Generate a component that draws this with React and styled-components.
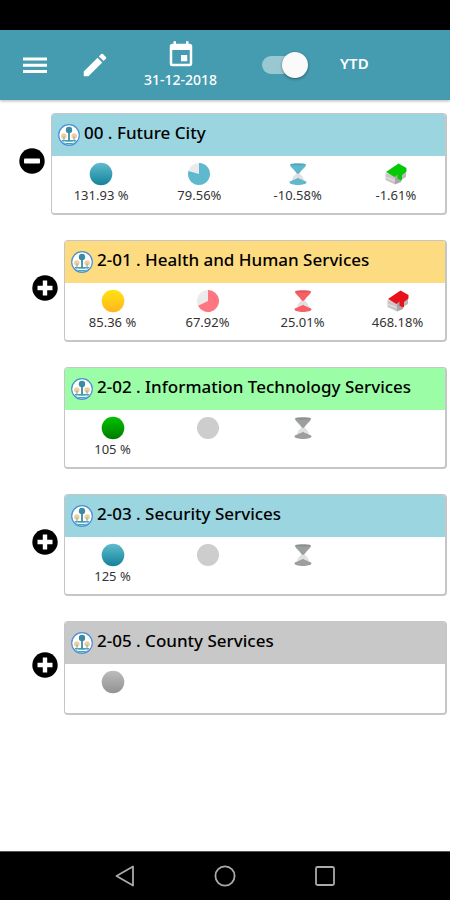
import React, { Component } from "react";
import styled, { createGlobalStyle } from "styled-components";
import { MdEvent } from "react-icons/md";

const GlobalStyle = createGlobalStyle`
* {
  box-sizing: border-box;
}
body {
  margin: 0;
  background: #fff;
  color: #000;
  font-family: "Noto Sans", "Open Sans", sans-serif;
}
button {
  margin: 0;
  padding: 0;
  border: 0;
  background: none;
  color: inherit;
  font: inherit;
  cursor: pointer;
}
`;

const Screen = styled.div`
  display: flex;
  flex-direction: column;
  min-height: 100vh;
`;

const StatusBar = styled.div`
  height: 30px;
  background: #000;
`;

const Toolbar = styled.header`
  display: flex;
  align-items: center;
  height: 70px;
  padding-left: 20px;
  background: #459baf;
  color: #fff;
  box-shadow: 0 1px 3px rgba(0, 0, 0, 0.3);
`;

const IconButton = styled.button`
  display: flex;
  margin-right: 30px;
`;

const DateButton = styled.button`
  display: flex;
  flex-direction: column;
  align-items: center;
  margin-left: 4px;
  font-size: 14px;
  font-weight: 500;
  line-height: 20px;
`;

const Switch = styled.label`
  display: flex;
  align-items: center;
  gap: 32px;
  margin-left: 45px;
  cursor: pointer;
`;

const SwitchText = styled.span`
  padding-bottom: 4px;
  font-size: 15px;
  font-weight: 600;
  line-height: 20px;
`;

const SwitchInput = styled.input`
  appearance: none;
  display: flex;
  align-items: center;
  width: 46px;
  height: 26px;
  margin: 0;
  cursor: pointer;
  &::before {
    content: "";
    width: 36px;
    height: 18px;
    border-radius: 9px;
    background: rgba(255, 255, 255, 0.45);
  }
  &::after {
    content: "";
    flex: none;
    width: 26px;
    height: 26px;
    margin-left: -36px;
    border-radius: 50%;
    background: #fafafa;
    box-shadow: 0 1px 3px rgba(0, 0, 0, 0.4);
  }
  &:checked::after {
    margin-left: -16px;
  }
`;

const Tree = styled.main`
  flex: 1;
  display: flex;
  flex-direction: column;
  gap: 25px;
  padding: 13px 3px 24px 19px;
`;

const Node = styled.div`
  display: flex;
  align-items: center;
  gap: 6px;
  padding-left: ${(props) => props.$level * 13}px;
`;

const Toggle = styled.div`
  flex: none;
  width: 26px;
  padding-bottom: 6px;
  button {
    display: block;
  }
  svg {
    display: block;
  }
`;

const Card = styled.section`
  flex: 1;
  min-width: 0;
  border: 1px solid #c6c6c6;
  border-right-width: 2px;
  border-bottom-width: 2px;
  border-radius: 4px;
  background: #fff;
  overflow: hidden;
`;

const CardHeader = styled.div`
  display: flex;
  align-items: center;
  gap: 4px;
  height: 42px;
  padding-left: 6px;
  background: ${(props) => props.$color};
`;

const CardTitle = styled.h2`
  margin: 0;
  padding-bottom: 4px;
  font-size: 17px;
  font-weight: 500;
  line-height: 24px;
  white-space: nowrap;
`;

const Metrics = styled.div`
  display: grid;
  grid-template-columns: repeat(4, 1fr);
  min-height: 49px;
  padding: 6px 0 9px;
`;

const Metric = styled.div`
  display: flex;
  flex-direction: column;
  align-items: center;
  font-size: 13px;
  line-height: 18px;
  color: #333;
`;

const NavBar = styled.nav`
  display: grid;
  grid-template-columns: repeat(3, 1fr);
  justify-items: center;
  align-items: center;
  height: 49px;
  padding: 0 75px;
  background: #000;
  border-top: 1px solid #555;
  svg {
    display: block;
  }
`;

const palette = {
  blue: ["#5fbccd", "#13829a"],
  yellow: ["#ffe310", "#ffb520"],
  green: ["#00c400", "#007a00"],
  gray: ["#bcbcbc", "#929292"],
};

const MenuIcon = () => (
  <svg width="30" height="30" viewBox="0 0 30 30" fill="currentColor">
    <path d="M3 7.500H27V10.500H3ZM3 13.700H27V16.700H3ZM3 20H27V23H3Z" />
  </svg>
);

const PencilIcon = () => (
  <svg width="30" height="30" viewBox="0 0 24 24" fill="currentColor">
    <path d="M3 17.250V21h3.750L17.810 9.940l-3.750-3.750L3 17.250zM20.710 7.040c.390-.390.390-1.020 0-1.410l-2.340-2.340c-.390-.390-1.020-.390-1.410 0l-1.830 1.830 3.750 3.750 1.830-1.830z" />
  </svg>
);

const Ball = ({ color }) => (
  <svg width="24" height="24" viewBox="0 0 24 24">
    <defs>
      <linearGradient id={`ball-${color}`} x1="0" y1="0" x2="0" y2="1">
        <stop offset="0" stopColor={palette[color][0]} />
        <stop offset="1" stopColor={palette[color][1]} />
      </linearGradient>
    </defs>
    <circle cx="12" cy="12" r="11.3" fill={`url(#ball-${color})`} />
  </svg>
);

// share is the filled part of the pie, clockwise from the top
const Pie = ({ share, color }) => {
  const angle = share * 2 * Math.PI;
  const x = 12 + 11 * Math.sin(angle);
  const y = 12 - 11 * Math.cos(angle);
  return (
    <svg width="24" height="24" viewBox="0 0 24 24">
      <circle cx="12" cy="12" r="11" fill={share ? "#ebebeb" : "#cdcdcd"} />
      {share ? (
        <path d={`M12 12V1A11 11 0 ${share > 0.5 ? 1 : 0} 1 ${x} ${y}Z`} fill={color} />
      ) : null}
    </svg>
  );
};

const Hourglass = ({ color }) => (
  <svg width="24" height="24" viewBox="0 0 24 24">
    <path d="M12 10L16.500 14.500L19 20H5L7.500 14.500Z" fill="#e2e0e0" />
    <path d="M4 2.500C4 0.800 20 0.800 20 2.500C20 4.500 18 6 16 8C14.500 9.500 13.500 12 12 12S9.500 9.500 8 8C6 6 4 4.500 4 2.500Z" fill={color} />
    <path d="M3.500 20.500C3.500 18.700 8 18.500 12 15.800C16 18.500 20.500 18.700 20.500 20.500C20.500 23.800 3.500 23.800 3.500 20.500Z" fill={color} />
    <ellipse cx="12" cy="2.600" rx="7.500" ry="1" fill="#000" opacity="0.1" />
  </svg>
);

const House = ({ color }) => (
  <svg width="24" height="24" viewBox="0 0 24 24">
    <path d="M1.500 11L11 14V22.500L1.500 18Z" fill="#c9c5c9" />
    <path d="M11 14L15 10L17 12V20L11 22.500Z" fill="#aaa6aa" />
    <path d="M17 11L22 9V15L17 18Z" fill="#bcb8bc" />
    <path d="M2 10L14.500 1.500L22.500 6V9.500L18 13V18.500L13.500 17V12.500L10.500 15Z" fill={color} />
    <path d="M2 15.500L10.500 18.500" stroke="#e4e1e4" strokeWidth="1.200" />
  </svg>
);

const CityLogo = () => (
  <svg width="22" height="22" viewBox="0 0 22 22">
    <circle cx="11" cy="11" r="10.300" fill="#fff" stroke="#4c8fd6" strokeWidth="1.200" />
    <path d="M3.500 16H18.500C17 19 14 20.500 11 20.500S5 19 3.500 16Z" fill="#42a3bb" />
    <path d="M5.500 17.800Q11 19 16.500 17.800" stroke="#fff" strokeWidth="1.200" fill="none" />
    <circle cx="5.800" cy="12" r="2.800" fill="#edd0a2" />
    <circle cx="16.200" cy="12" r="2.800" fill="#edd0a2" />
    <circle cx="11" cy="6" r="3.200" fill="#3a8ba3" />
    <path d="M11 7V16.500" stroke="#3a8ba3" strokeWidth="1.800" />
    <path d="M6 12.500V16.500M16 12.500V16.500" stroke="#8ea58e" strokeWidth="1" />
  </svg>
);

const ToggleIcon = ({ open }) => (
  <svg width="26" height="26" viewBox="0 0 26 26">
    <circle cx="13" cy="13" r="12.700" fill="#000" />
    {open ? (
      <rect x="5" y="10.500" width="16" height="5" rx="1" fill="#fff" />
    ) : (
      <path d="M10.800 5.500H15.200V10.800H20.500V15.200H15.200V20.500H10.800V15.200H5.500V10.800H10.800Z" fill="#fff" />
    )}
  </svg>
);

const departments = [
  {
    title: "00 . Future City",
    level: 0,
    color: "#9bd5e0",
    ball: "blue",
    score: "131.93 %",
    pie: { share: 0.7956, color: "#5fb9ce", text: "79.56%" },
    time: { color: "#5fb9cd", text: "-10.58%" },
    house: { color: "#05c905", text: "-1.61%" },
  },
  {
    title: "2-01 . Health and Human Services",
    level: 1,
    color: "#fddb80",
    toggle: true,
    ball: "yellow",
    score: "85.36 %",
    pie: { share: 0.6792, color: "#ff7680", text: "67.92%" },
    time: { color: "#f65f66", text: "25.01%" },
    house: { color: "#e9121b", text: "468.18%" },
  },
  {
    title: "2-02 . Information Technology Services",
    level: 1,
    color: "#9bfea7",
    ball: "green",
    score: "105 %",
    pie: { share: 0 },
    time: { color: "#9b9f9f" },
  },
  {
    title: "2-03 . Security Services",
    level: 1,
    color: "#9bd5e0",
    toggle: true,
    ball: "blue",
    score: "125 %",
    pie: { share: 0 },
    time: { color: "#9b9f9f" },
  },
  {
    title: "2-05 . County Services",
    level: 1,
    color: "#c8c8c8",
    toggle: true,
    ball: "gray",
  },
];

class App extends Component {
  constructor(props) {
    super(props);

    this.state = {
      open: true,
      ytd: true,
    };
    this.handleToggle = this.handleToggle.bind(this);
    this.handleYtd = this.handleYtd.bind(this);
  }

  handleToggle() {
    this.setState({ open: !this.state.open });
  }

  handleYtd(e) {
    this.setState({ ytd: e.target.checked });
  }

  renderToggle(item) {
    if (item.level === 0) {
      return (
        <button type="button" aria-label="Collapse" onClick={this.handleToggle}>
          <ToggleIcon open={this.state.open} />
        </button>
      );
    }
    return item.toggle ? (
      <button type="button" aria-label="Expand">
        <ToggleIcon />
      </button>
    ) : null;
  }

  render() {
    const { open, ytd } = this.state;
    const visible = departments.filter((item) => open || item.level === 0);

    return (
      <Screen>
        <GlobalStyle />
        <StatusBar />
        <Toolbar>
          <IconButton type="button" aria-label="Menu">
            <MenuIcon />
          </IconButton>
          <IconButton type="button" aria-label="Edit">
            <PencilIcon />
          </IconButton>
          <DateButton type="button">
            <MdEvent size={30} />
            31-12-2018
          </DateButton>
          <Switch>
            <SwitchInput type="checkbox" checked={ytd} onChange={this.handleYtd} />
            <SwitchText>YTD</SwitchText>
          </Switch>
        </Toolbar>

        <Tree>
          {visible.map((item) => (
            <Node key={item.title} $level={item.level}>
              <Toggle>{this.renderToggle(item)}</Toggle>
              <Card>
                <CardHeader $color={item.color}>
                  <CityLogo />
                  <CardTitle>{item.title}</CardTitle>
                </CardHeader>
                <Metrics>
                  <Metric>
                    <Ball color={item.ball} />
                    {item.score}
                  </Metric>
                  {item.pie ? (
                    <Metric>
                      <Pie share={item.pie.share} color={item.pie.color} />
                      {item.pie.text}
                    </Metric>
                  ) : null}
                  {item.time ? (
                    <Metric>
                      <Hourglass color={item.time.color} />
                      {item.time.text}
                    </Metric>
                  ) : null}
                  {item.house ? (
                    <Metric>
                      <House color={item.house.color} />
                      {item.house.text}
                    </Metric>
                  ) : null}
                </Metrics>
              </Card>
            </Node>
          ))}
        </Tree>

        <NavBar>
          <button type="button" aria-label="Back">
            <svg width="22" height="22" viewBox="0 0 22 22" fill="none" stroke="#aaa" strokeWidth="1.800" strokeLinejoin="round">
              <path d="M19 1.500V20.500L2.500 11Z" />
            </svg>
          </button>
          <button type="button" aria-label="Home">
            <svg width="22" height="22" viewBox="0 0 22 22" fill="none" stroke="#aaa" strokeWidth="1.800">
              <circle cx="11" cy="11" r="9.600" />
            </svg>
          </button>
          <button type="button" aria-label="Recent apps">
            <svg width="22" height="22" viewBox="0 0 22 22" fill="none" stroke="#aaa" strokeWidth="1.800">
              <rect x="2" y="2" width="18" height="18" rx="1.500" />
            </svg>
          </button>
        </NavBar>
      </Screen>
    );
  }
}

export default App;
